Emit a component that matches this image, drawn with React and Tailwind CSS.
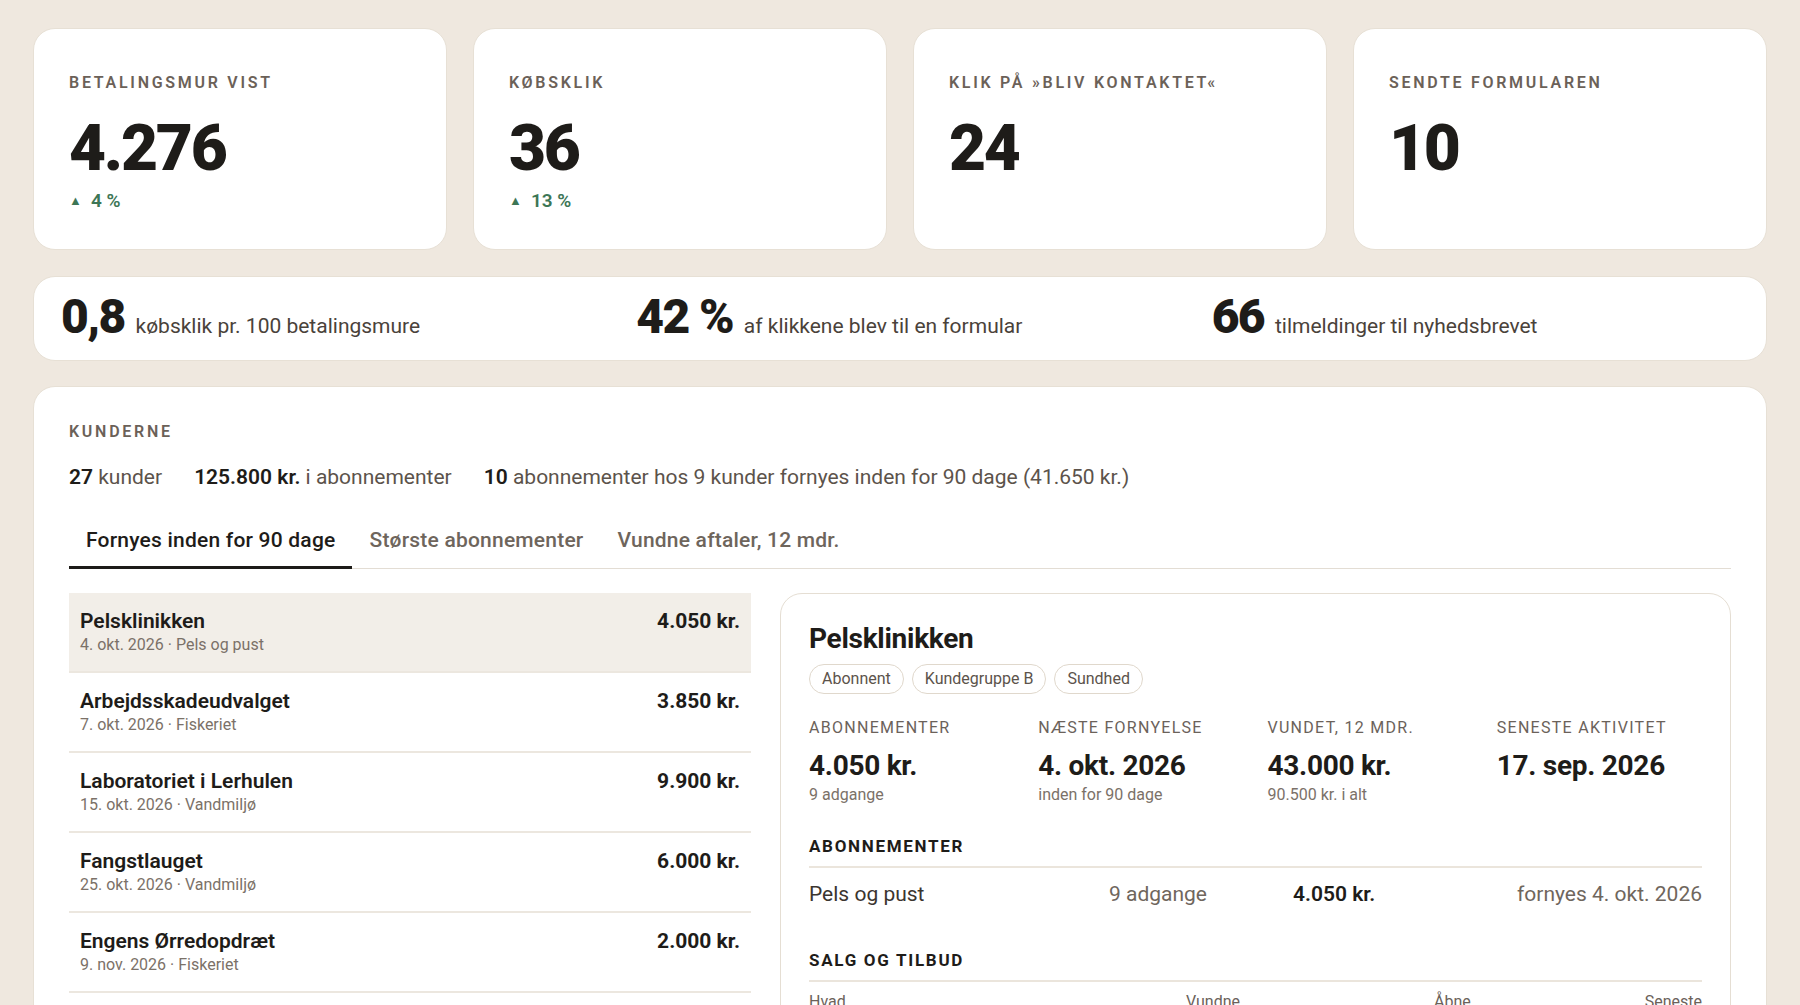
import { useState } from "react";

const kpis = [
  { label: "Betalingsmur vist", value: "4.276", delta: "4 %" },
  { label: "Købsklik", value: "36", delta: "13 %" },
  { label: "Klik på »bliv kontaktet«", value: "24" },
  { label: "Sendte formularen", value: "10" },
];

const ratios = [
  { value: "0,8", text: "købsklik pr. 100 betalingsmure" },
  { value: "42 %", text: "af klikkene blev til en formular" },
  { value: "66", text: "tilmeldinger til nyhedsbrevet" },
];

const renewals = [
  { name: "Pelsklinikken", date: "4. okt. 2026", product: "Pels og pust", amount: "4.050 kr." },
  { name: "Arbejdsskadeudvalget", date: "7. okt. 2026", product: "Fiskeriet", amount: "3.850 kr." },
  { name: "Laboratoriet i Lerhulen", date: "15. okt. 2026", product: "Vandmiljø", amount: "9.900 kr." },
  { name: "Fangstlauget", date: "25. okt. 2026", product: "Vandmiljø", amount: "6.000 kr." },
  { name: "Engens Ørredopdræt", date: "9. nov. 2026", product: "Fiskeriet", amount: "2.000 kr." },
  { name: "Kystens Naturskole", date: "14. nov. 2026", product: "Vandmiljø", amount: "3.200 kr." },
];

const tabs = ["Fornyes inden for 90 dage", "Største abonnementer", "Vundne aftaler, 12 mdr."];

function KpiCard({ label, value, delta }) {
  return (
    <div className="rounded-[22px] border border-[#e7e0d5] bg-white px-[35px] pt-[44px] pb-[36px]">
      <div className="text-[16px] font-semibold uppercase leading-5 tracking-[0.17em] text-[#6b6158]">
        {label}
      </div>
      <div className="mt-6 text-[64px] font-black leading-none tracking-[-0.035em] text-[#1e1c19]">
        {value}
      </div>
      {delta && (
        <div className="mt-2 flex items-center gap-[9px] text-[19px] font-semibold leading-6 text-[#3d7656]">
          <span className="text-[13px]">▲</span>
          <span>{delta}</span>
        </div>
      )}
    </div>
  );
}

function Stat({ label, value, sub }) {
  return (
    <div>
      <div className="text-[16px] uppercase leading-5 tracking-[0.08em] text-[#6b625a]">{label}</div>
      <div className="mt-3 text-[28px] font-bold leading-8 tracking-[-0.01em] text-[#1e1c19]">{value}</div>
      {sub && <div className="mt-[3px] text-[16px] leading-5 text-[#7b7168]">{sub}</div>}
    </div>
  );
}

function SectionHeading({ children, className = "" }) {
  return (
    <div
      className={`border-b-2 border-[#ebe5dc] pb-[9px] text-[17px] font-bold uppercase leading-[22px] tracking-[0.1em] text-[#1e1c19] ${className}`}
    >
      {children}
    </div>
  );
}

function CustomerPanel() {
  return (
    <div className="rounded-[22px] border border-[#e5ded3] bg-white px-[28px] pt-[29px] pb-8">
      <h2 className="text-[28px] font-bold leading-8 tracking-[-0.01em] text-[#1e1c19]">Pelsklinikken</h2>
      <div className="mt-[9px] flex gap-2">
        {["Abonnent", "Kundegruppe B", "Sundhed"].map((t) => (
          <span
            key={t}
            className="flex h-[30px] items-center rounded-full border border-[#e0d8cc] px-3 text-[16px] text-[#5c534b]"
          >
            {t}
          </span>
        ))}
      </div>

      <div className="mt-6 grid grid-cols-4 gap-x-6">
        <Stat label="Abonnementer" value="4.050 kr." sub="9 adgange" />
        <Stat label="Næste fornyelse" value="4. okt. 2026" sub="inden for 90 dage" />
        <Stat label="Vundet, 12 mdr." value="43.000 kr." sub="90.500 kr. i alt" />
        <Stat label="Seneste aktivitet" value="17. sep. 2026" />
      </div>

      <SectionHeading className="mt-[30px]">Abonnementer</SectionHeading>
      <div className="flex pt-3 text-[21px] leading-7 text-[#3b352f]">
        <span className="w-[290px]">Pels og pust</span>
        <span className="w-[108px] text-right text-[#6f665d]">9 adgange</span>
        <span className="ml-[86px] font-semibold text-[#1e1c19]">4.050 kr.</span>
        <span className="flex-1 text-right text-[#6f665d]">fornyes 4. okt. 2026</span>
      </div>

      <SectionHeading className="mt-[41px]">Salg og tilbud</SectionHeading>
      <div className="grid grid-cols-[377px_248px_1fr_auto] pt-[10px] text-[16px] leading-5 text-[#6b625a]">
        <span>Hvad</span>
        <span>Vundne</span>
        <span>Åbne</span>
        <span className="text-right">Seneste</span>
      </div>
      <div className="grid grid-cols-[377px_248px_1fr_auto] border-b border-[#ebe5dc] py-3 text-[19px] text-[#1e1c19]">
        <span>Pels og pust</span>
        <span>43.000 kr.</span>
        <span>0 kr.</span>
        <span className="text-right">17. sep. 2026</span>
      </div>
    </div>
  );
}

export default function App() {
  const [tab, setTab] = useState(0);
  const [selected, setSelected] = useState(0);

  return (
    <div className="h-screen overflow-hidden bg-[#efe8df] px-[33px] pt-[28px] font-['Roboto','Liberation_Sans',sans-serif] text-[#1e1c19]">
      <div className="grid grid-cols-4 gap-[26px]">
        {kpis.map((k) => (
          <KpiCard key={k.label} {...k} />
        ))}
      </div>

      <div className="mt-[26px] grid grid-cols-3 gap-12 rounded-[22px] border border-[#e7e0d5] bg-white px-[27px] py-[17px]">
        {ratios.map((r) => (
          <div key={r.value} className="flex items-baseline gap-[11px]">
            <span className="text-[48px] font-black leading-[46px] tracking-[-0.035em]">{r.value}</span>
            <span className="text-[21px] text-[#4a423a]">{r.text}</span>
          </div>
        ))}
      </div>

      <div className="mt-[25px] rounded-[22px] border border-[#e7e0d5] bg-white px-[35px] pt-[35px] pb-10">
        <div className="text-[16px] font-semibold uppercase leading-5 tracking-[0.17em] text-[#6b6158]">
          Kunderne
        </div>
        <div className="mt-[21px] flex gap-[32px] text-[21px] leading-7 text-[#5c534b]">
          <span>
            <b className="font-semibold text-[#1e1c19]">27</b> kunder
          </span>
          <span>
            <b className="font-semibold text-[#1e1c19]">125.800 kr.</b> i abonnementer
          </span>
          <span>
            <b className="font-semibold text-[#1e1c19]">10</b> abonnementer hos 9 kunder fornyes inden for 90 dage (41.650 kr.)
          </span>
        </div>

        <div className="mt-[35px] flex border-b border-[#e3ddd4]">
          {tabs.map((t, i) => (
            <button
              key={t}
              onClick={() => setTab(i)}
              className={`-mb-px border-b-[3px] px-[17px] pb-3 text-[21px] font-medium leading-7 tracking-[0.01em] ${
                tab === i ? "border-[#1d1b18] text-[#1e1c19]" : "border-transparent text-[#6e655c]"
              }`}
            >
              {t}
            </button>
          ))}
        </div>

        <div className="mt-6 grid grid-cols-[682px_1fr] gap-[29px]">
          <div>
            {renewals.map((r, i) => (
              <div
                key={r.name}
                onClick={() => setSelected(i)}
                className={`flex justify-between border-b-2 border-[#ece7df] px-[11px] pt-[15px] pb-[15px] ${
                  selected === i ? "bg-[#f2eee8]" : ""
                }`}
              >
                <div>
                  <div className="text-[21px] font-semibold leading-[26px] text-[#1e1c19]">{r.name}</div>
                  <div className="text-[16px] leading-[22px] text-[#7b7168]">
                    {r.date} · {r.product}
                  </div>
                </div>
                <div className="text-[21px] font-bold leading-[26px] text-[#1e1c19]">{r.amount}</div>
              </div>
            ))}
          </div>
          <CustomerPanel />
        </div>
      </div>
    </div>
  );
}
